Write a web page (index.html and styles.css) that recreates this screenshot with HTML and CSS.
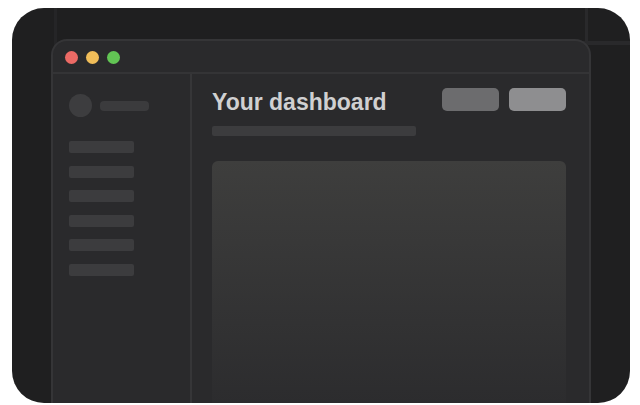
FILE: index.html
```html
<!DOCTYPE html>
<html lang="en">
<head>
<meta charset="utf-8">
<title>Your dashboard</title>
<link rel="stylesheet" href="styles.css">
</head>
<body>
<div class="stage">
  <span class="guide guide-left"></span>
  <span class="guide guide-right"></span>
  <span class="guide guide-across"></span>
  <div class="window">
    <header class="titlebar">
      <span class="dot dot-red"></span>
      <span class="dot dot-yellow"></span>
      <span class="dot dot-green"></span>
    </header>
    <div class="body">
      <aside class="sidebar">
        <div class="profile">
          <span class="avatar"></span>
          <span class="name"></span>
        </div>
        <nav class="menu">
          <span class="item"></span>
          <span class="item"></span>
          <span class="item"></span>
          <span class="item"></span>
          <span class="item"></span>
          <span class="item"></span>
        </nav>
      </aside>
      <main class="content">
        <div class="top">
          <h1 class="title">Your dashboard</h1>
          <div class="actions">
            <button class="action" type="button" aria-label="Secondary action"></button>
            <button class="action action-primary" type="button" aria-label="Primary action"></button>
          </div>
        </div>
        <div class="subtitle"></div>
        <section class="panel"></section>
      </main>
    </div>
  </div>
</div>
</body>
</html>
```
FILE: styles.css
```css
* {
  box-sizing: border-box;
}

body {
  margin: 0;
  min-height: 100vh;
  padding: 8px 10px 2px 12px;
  display: flex;
  background: #fff;
  font-family: "Liberation Sans", Helvetica, Arial, sans-serif;
}

.stage {
  position: relative;
  flex: 1;
  display: flex;
  padding: 31px 39px 0;
  overflow: hidden;
  border-radius: 32px;
  background: #1f1f20;
}

.guide {
  position: absolute;
  background: #29292b;
}

.guide-left {
  top: 0;
  left: 42px;
  width: 3px;
  height: 40px;
  background: #252527;
}

.guide-right {
  top: 0;
  right: 42px;
  width: 3px;
  height: 40px;
}

.guide-across {
  top: 33px;
  right: 0;
  width: 48px;
  height: 4px;
}

.window {
  position: relative;
  flex: 1;
  display: flex;
  flex-direction: column;
  border: 2px solid #353537;
  border-bottom: 0;
  border-radius: 16px 16px 0 0;
  background: #2a2a2c;
}

.titlebar {
  display: flex;
  align-items: center;
  gap: 8px;
  height: 33px;
  padding: 2px 12px 0;
  border-bottom: 2px solid #343436;
}

.dot {
  width: 13px;
  height: 13px;
  border-radius: 50%;
}

.dot-red {
  background: #ec6a65;
}

.dot-yellow {
  background: #f0bd59;
}

.dot-green {
  background: #62c554;
}

.body {
  flex: 1;
  display: flex;
}

.sidebar {
  width: 139px;
  padding: 20px 16px;
  border-right: 2px solid #363638;
}

.profile {
  display: flex;
  align-items: center;
  gap: 8px;
  margin-bottom: 24px;
}

.avatar {
  width: 23px;
  height: 23px;
  border-radius: 50%;
  background: #3d3d3f;
}

.name {
  width: 49px;
  height: 10px;
  border-radius: 4px;
  background: #3b3b3d;
}

.menu {
  display: flex;
  flex-direction: column;
  justify-content: space-between;
  height: 135px;
}

.item {
  width: 65px;
  height: 12px;
  border-radius: 2px;
  background: #3c3c3e;
}

.content {
  flex: 1;
  display: flex;
  flex-direction: column;
  padding: 14px 23px 0 20px;
}

.top {
  display: flex;
  justify-content: space-between;
  margin-bottom: 10px;
}

.title {
  margin: 0;
  font-size: 23px;
  line-height: 28px;
  font-weight: 700;
  color: #d0d0d1;
}

.actions {
  display: flex;
  gap: 10px;
}

.action {
  width: 57px;
  height: 23px;
  padding: 0;
  border: 0;
  border-radius: 5px;
  background: #6c6c6e;
}

.action-primary {
  background: #8e8e90;
}

.subtitle {
  width: 204px;
  height: 10px;
  margin-bottom: 25px;
  border-radius: 2px;
  background: #3c3c3e;
}

.panel {
  flex: 1;
  border-radius: 6px 6px 0 0;
  background: linear-gradient(#3e3e3d, #2c2c2e);
}
```
